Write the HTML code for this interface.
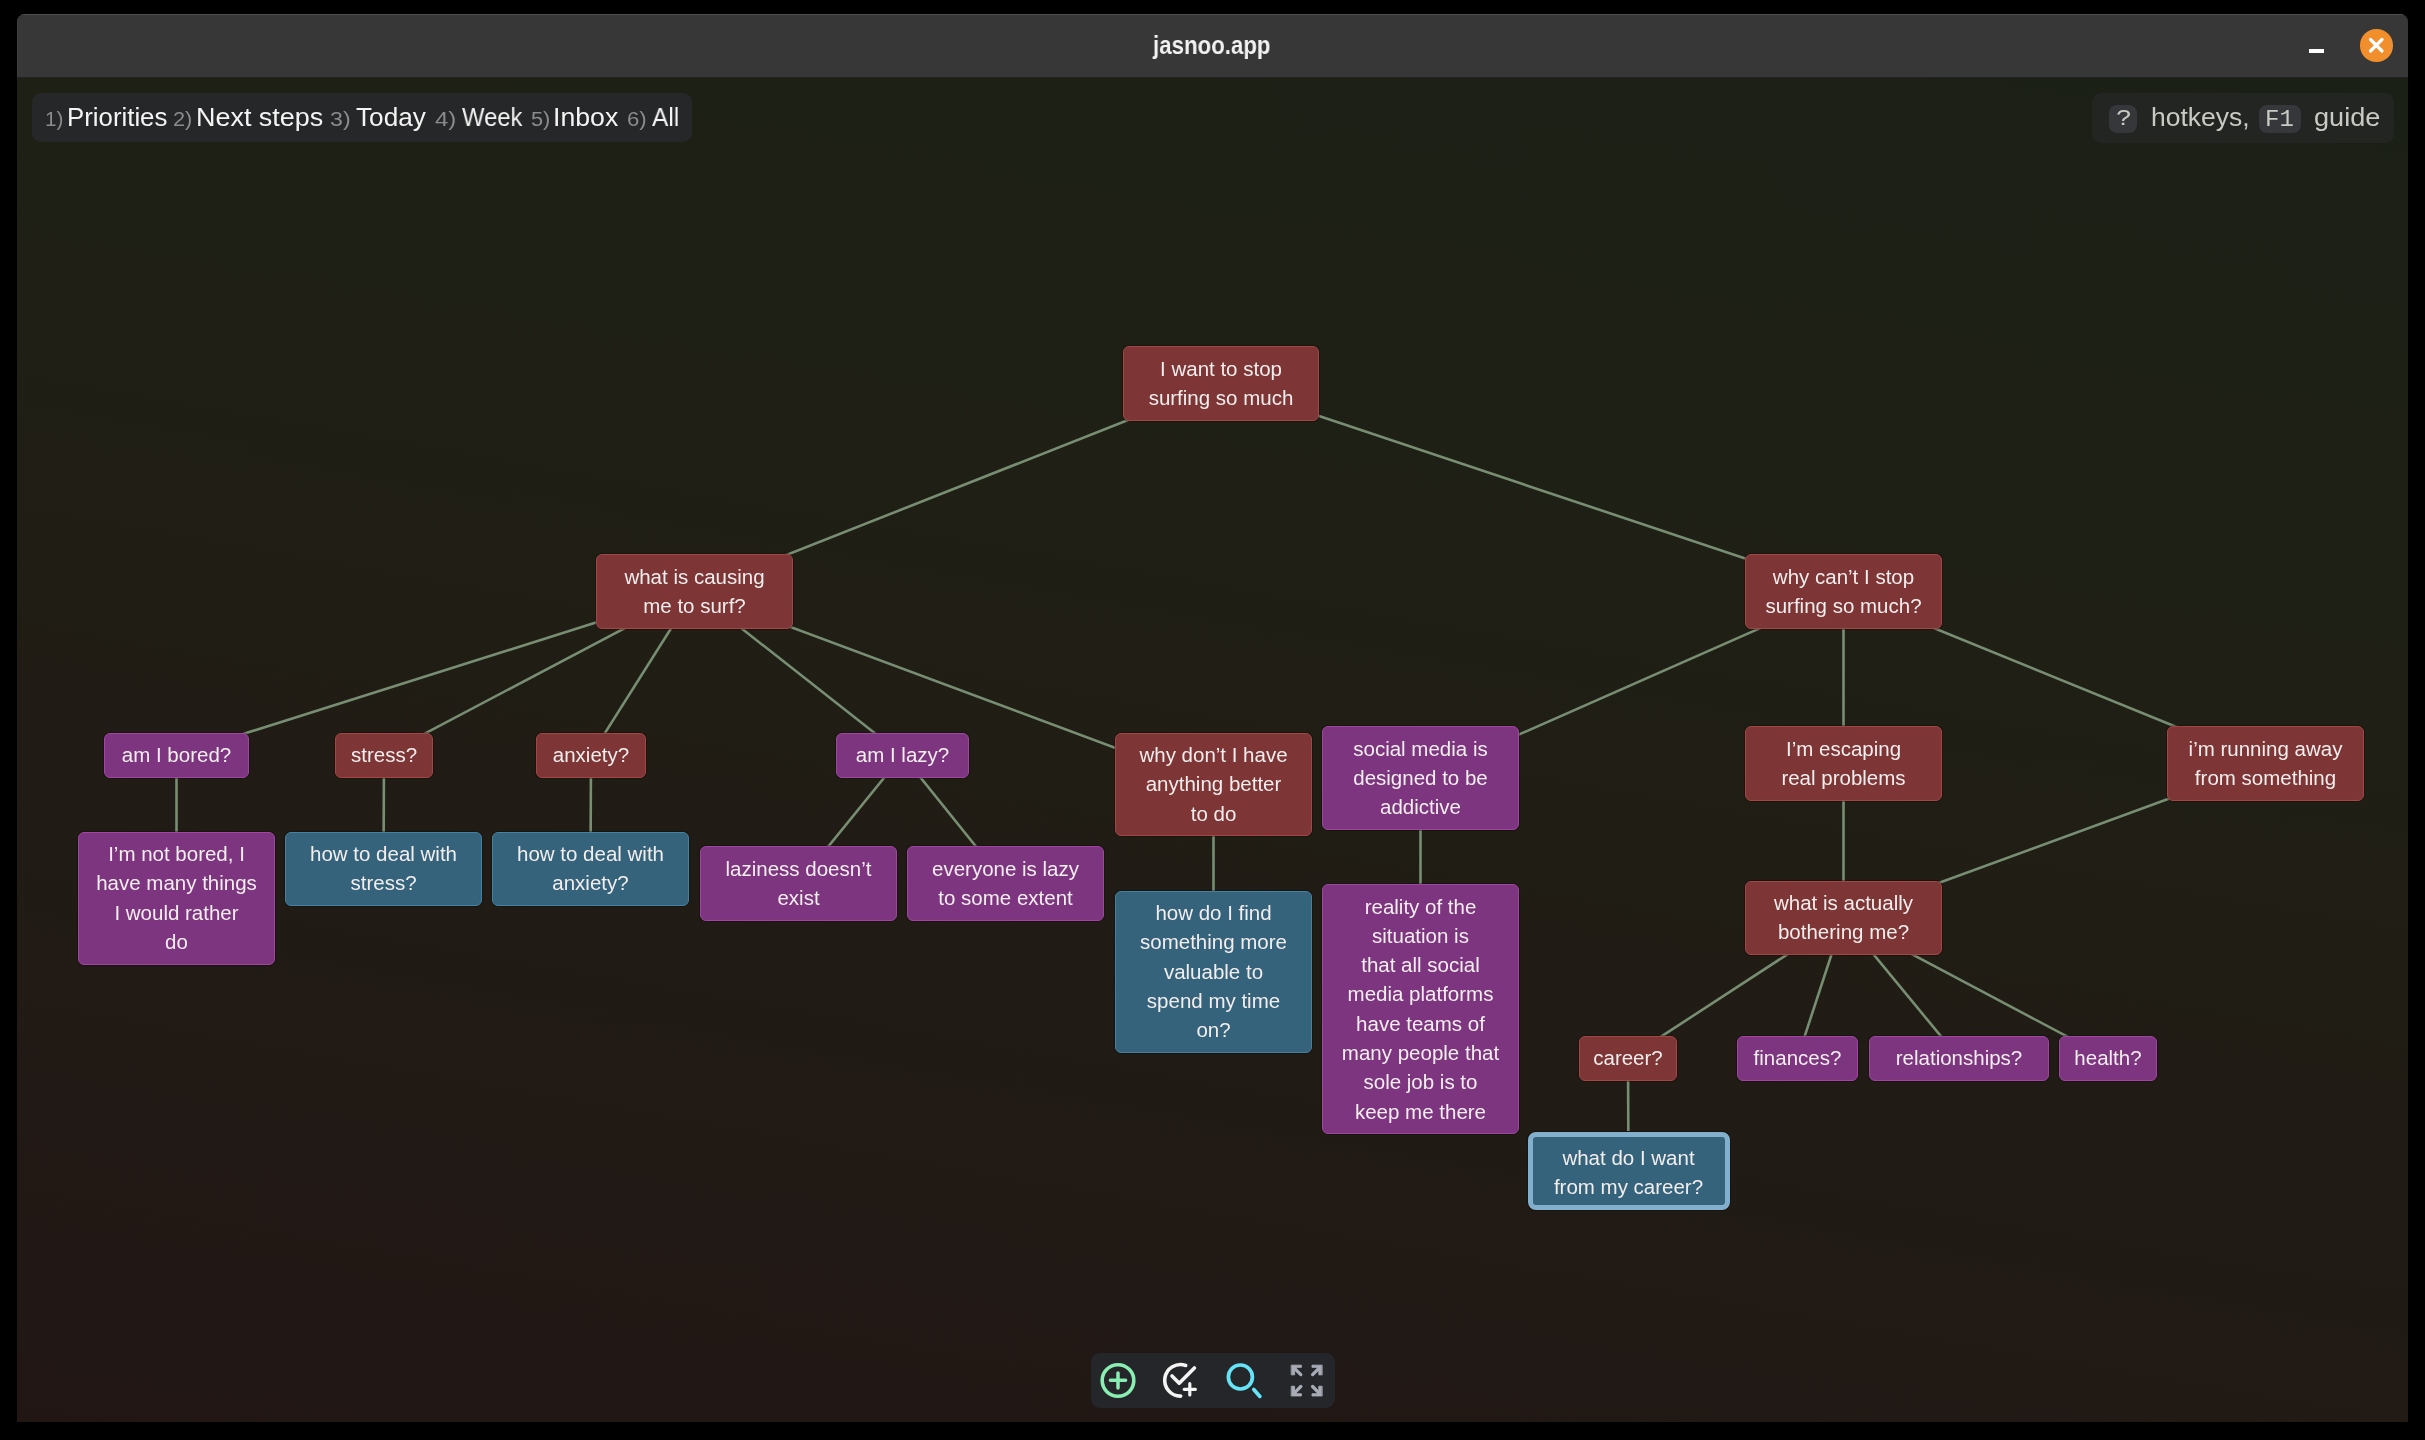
<!DOCTYPE html>
<html><head><meta charset="utf-8"><style>
html,body{margin:0;padding:0;width:2425px;height:1440px;background:#000;overflow:hidden;font-family:"Liberation Sans",sans-serif}
#nodes,.m{will-change:transform}
#win{position:absolute;left:17px;top:14px;width:2391px;height:1408px;border-radius:8px 8px 0 0;overflow:hidden;background:#1f2015}
#title{position:absolute;left:0;top:0;width:100%;height:63px;background:#373737;box-shadow:inset 0 1px 0 #4e4e4e, inset 1px 0 0 #3d3d3d}
#sep{position:absolute;left:0;top:63px;width:100%;height:1px;background:#222}
#canvas{position:absolute;left:0;top:64px;width:2391px;height:1344px;background:linear-gradient(190deg,#1b2016 0%,#1f2015 30%,#211a15 75%,#211614 100%)}
svg.edges{position:absolute;left:-17px;top:-78px;width:2425px;height:1440px}
svg.edges line{stroke:#778e72;stroke-width:2.6}
.n{position:absolute;box-sizing:border-box;border:1.5px solid;border-radius:6px;box-shadow:0 0 0 1px rgba(10,12,0,.35);color:#f3eeee;font-size:20.5px;line-height:29.3px;text-align:center;padding-top:6.5px;white-space:nowrap}
.n.sel{border:5.5px solid #82b0cc;border-radius:8px;padding-top:5.5px;box-shadow:0 0 0 1px #1a1410}
.pill{position:absolute;background:#262729;border-radius:9px}
.badge{position:absolute;background:#35373a;border-radius:8px}
.m{position:absolute;white-space:nowrap;transform-origin:0 0}
</style></head><body>
<div id="win">
 <div id="title">
  <div style="position:absolute;left:2292px;top:35px;width:15px;height:3.5px;background:#fff"></div>
  <div style="position:absolute;left:2343px;top:15px;width:32.5px;height:32.5px;border-radius:50%;background:#f08f2c"></div>
  <svg style="position:absolute;left:2343px;top:15px" width="33" height="33" viewBox="0 0 33 33"><path d="M10.5 10.5 L22 22 M22 10.5 L10.5 22" stroke="#fff" stroke-width="3.2" stroke-linecap="round"/></svg>
 </div>
 <div id="sep"></div>
 <div id="canvas">
  <svg class="edges" viewBox="0 0 2425 1440"><line x1="1221.0" y1="383.3" x2="694.5" y2="591.3"/><line x1="1221.0" y1="383.3" x2="1843.5" y2="591.3"/><line x1="694.5" y1="591.3" x2="176.5" y2="755.1"/><line x1="694.5" y1="591.3" x2="384.0" y2="755.1"/><line x1="694.5" y1="591.3" x2="591.0" y2="755.1"/><line x1="694.5" y1="591.3" x2="902.5" y2="755.1"/><line x1="694.5" y1="591.3" x2="1213.5" y2="784.5"/><line x1="176.5" y1="755.1" x2="176.5" y2="898.1"/><line x1="384.0" y1="755.1" x2="383.5" y2="868.8"/><line x1="591.0" y1="755.1" x2="590.5" y2="868.8"/><line x1="902.5" y1="755.1" x2="798.5" y2="883.3"/><line x1="902.5" y1="755.1" x2="1005.5" y2="883.3"/><line x1="1213.5" y1="784.5" x2="1213.5" y2="971.8"/><line x1="1843.5" y1="591.3" x2="1420.5" y2="778.0"/><line x1="1843.5" y1="591.3" x2="1843.5" y2="763.3"/><line x1="1843.5" y1="591.3" x2="2265.5" y2="763.3"/><line x1="1420.5" y1="778.0" x2="1420.5" y2="1009.2"/><line x1="1843.5" y1="763.3" x2="1843.5" y2="917.8"/><line x1="2265.5" y1="763.3" x2="1843.5" y2="917.8"/><line x1="1843.5" y1="917.8" x2="1628.0" y2="1058.2"/><line x1="1843.5" y1="917.8" x2="1797.5" y2="1058.2"/><line x1="1843.5" y1="917.8" x2="1959.0" y2="1058.2"/><line x1="1843.5" y1="917.8" x2="2108.0" y2="1058.2"/><line x1="1628.0" y1="1058.2" x2="1628.5" y2="1171.0"/></svg>
 </div>
</div>
<div class="m" style="left:1153.05px;top:28.09px;font-size:26px;line-height:34px;color:#f2f2f2;font-family:'Liberation Sans',sans-serif;font-weight:bold;transform:scaleX(0.8562);">jasnoo.app</div>
<div id="nodes" style="position:absolute;left:0;top:0">
<div class="n" style="left:1123px;top:346px;width:196px;height:74.6px;background:#7d3535;border-color:#a44648">I want to stop<br>surfing so much</div><div class="n" style="left:596px;top:554px;width:197px;height:74.6px;background:#7d3535;border-color:#a44648">what is causing<br>me to surf?</div><div class="n" style="left:1745px;top:554px;width:197px;height:74.6px;background:#7d3535;border-color:#a44648">why can’t I stop<br>surfing so much?</div><div class="n" style="left:104px;top:732.5px;width:145px;height:45.3px;background:#7d357f;border-color:#a046a2">am I bored?</div><div class="n" style="left:335px;top:732.5px;width:98px;height:45.3px;background:#7d3535;border-color:#a44648">stress?</div><div class="n" style="left:536px;top:732.5px;width:110px;height:45.3px;background:#7d3535;border-color:#a44648">anxiety?</div><div class="n" style="left:836px;top:732.5px;width:133px;height:45.3px;background:#7d357f;border-color:#a046a2">am I lazy?</div><div class="n" style="left:1115px;top:732.5px;width:197px;height:103.9px;background:#7d3535;border-color:#a44648">why don’t I have<br>anything better<br>to do</div><div class="n" style="left:1322px;top:726px;width:197px;height:103.9px;background:#7d357f;border-color:#a046a2">social media is<br>designed to be<br>addictive</div><div class="n" style="left:1745px;top:726px;width:197px;height:74.6px;background:#7d3535;border-color:#a44648">I’m escaping<br>real problems</div><div class="n" style="left:2167px;top:726px;width:197px;height:74.6px;background:#7d3535;border-color:#a44648">i’m running away<br>from something</div><div class="n" style="left:78px;top:831.5px;width:197px;height:133.2px;background:#7d357f;border-color:#a046a2">I’m not bored, I<br>have many things<br>I would rather<br>do</div><div class="n" style="left:285px;top:831.5px;width:197px;height:74.6px;background:#35637b;border-color:#4681a3">how to deal with<br>stress?</div><div class="n" style="left:492px;top:831.5px;width:197px;height:74.6px;background:#35637b;border-color:#4681a3">how to deal with<br>anxiety?</div><div class="n" style="left:700px;top:846px;width:197px;height:74.6px;background:#7d357f;border-color:#a046a2">laziness doesn’t<br>exist</div><div class="n" style="left:907px;top:846px;width:197px;height:74.6px;background:#7d357f;border-color:#a046a2">everyone is lazy<br>to some extent</div><div class="n" style="left:1115px;top:890.5px;width:197px;height:162.5px;background:#35637b;border-color:#4681a3">how do I find<br>something more<br>valuable to<br>spend my time<br>on?</div><div class="n" style="left:1322px;top:884px;width:197px;height:250.4px;background:#7d357f;border-color:#a046a2">reality of the<br>situation is<br>that all social<br>media platforms<br>have teams of<br>many people that<br>sole job is to<br>keep me there</div><div class="n" style="left:1745px;top:880.5px;width:197px;height:74.6px;background:#7d3535;border-color:#a44648">what is actually<br>bothering me?</div><div class="n" style="left:1579px;top:1035.5px;width:98px;height:45.3px;background:#7d3535;border-color:#a44648">career?</div><div class="n" style="left:1737px;top:1035.5px;width:121px;height:45.3px;background:#7d357f;border-color:#a046a2">finances?</div><div class="n" style="left:1869px;top:1035.5px;width:180px;height:45.3px;background:#7d357f;border-color:#a046a2">relationships?</div><div class="n" style="left:2059px;top:1035.5px;width:98px;height:45.3px;background:#7d357f;border-color:#a046a2">health?</div><div class="n sel" style="left:1527.5px;top:1132px;width:202px;height:78.0px;background:#35637b">what do I want<br>from my career?</div>
</div>
<div class="pill" style="left:32px;top:93px;width:660px;height:48.5px"></div>
<div class="pill" style="left:2092px;top:93px;width:301.5px;height:49.5px;background:#232522"></div>
<div class="badge" style="left:2109px;top:105px;width:28px;height:28px"></div>
<div class="badge" style="left:2259px;top:105px;width:41.5px;height:28px"></div>
<div class="pill" style="left:1090.5px;top:1352.7px;width:244.2px;height:55.5px;background:#252629"></div>
<div class="m" style="left:44.57px;top:105.32px;font-size:20.7px;line-height:27px;color:#8a8b8c;font-family:'Liberation Sans',sans-serif;font-weight:normal;transform:scaleX(0.9855);">1)</div><div class="m" style="left:66.64px;top:100.06px;font-size:25.8px;line-height:34px;color:#f4f4f4;font-family:'Liberation Sans',sans-serif;font-weight:normal;transform:scaleX(1.0003);">Priorities</div><div class="m" style="left:172.91px;top:105.32px;font-size:20.7px;line-height:27px;color:#8a8b8c;font-family:'Liberation Sans',sans-serif;font-weight:normal;transform:scaleX(1.0529);">2)</div><div class="m" style="left:196.45px;top:100.06px;font-size:25.8px;line-height:34px;color:#f4f4f4;font-family:'Liberation Sans',sans-serif;font-weight:normal;transform:scaleX(1.0440);">Next steps</div><div class="m" style="left:330.07px;top:105.32px;font-size:20.7px;line-height:27px;color:#8a8b8c;font-family:'Liberation Sans',sans-serif;font-weight:normal;transform:scaleX(1.1191);">3)</div><div class="m" style="left:356.48px;top:100.06px;font-size:25.8px;line-height:34px;color:#f4f4f4;font-family:'Liberation Sans',sans-serif;font-weight:normal;transform:scaleX(1.0151);">Today</div><div class="m" style="left:434.82px;top:105.32px;font-size:20.7px;line-height:27px;color:#8a8b8c;font-family:'Liberation Sans',sans-serif;font-weight:normal;transform:scaleX(1.1570);">4)</div><div class="m" style="left:462.00px;top:100.06px;font-size:25.8px;line-height:34px;color:#f4f4f4;font-family:'Liberation Sans',sans-serif;font-weight:normal;transform:scaleX(0.9232);">Week</div><div class="m" style="left:530.93px;top:105.32px;font-size:20.7px;line-height:27px;color:#8a8b8c;font-family:'Liberation Sans',sans-serif;font-weight:normal;transform:scaleX(1.0518);">5)</div><div class="m" style="left:553.30px;top:100.06px;font-size:25.8px;line-height:34px;color:#f4f4f4;font-family:'Liberation Sans',sans-serif;font-weight:normal;transform:scaleX(1.0341);">Inbox</div><div class="m" style="left:626.79px;top:105.32px;font-size:20.7px;line-height:27px;color:#8a8b8c;font-family:'Liberation Sans',sans-serif;font-weight:normal;transform:scaleX(1.0715);">6)</div><div class="m" style="left:651.80px;top:100.06px;font-size:25.8px;line-height:34px;color:#f4f4f4;font-family:'Liberation Sans',sans-serif;font-weight:normal;transform:scaleX(0.9487);">All</div><div class="m" style="left:2115.57px;top:105.21px;font-size:22.5px;line-height:29px;color:#c9cac3;font-family:'Liberation Mono',monospace;font-weight:normal;transform:scaleX(1.1820);">?</div><div class="m" style="left:2150.75px;top:100.50px;font-size:25.1px;line-height:33px;color:#c9cac3;font-family:'Liberation Sans',sans-serif;font-weight:normal;transform:scaleX(1.0557);">hotkeys,</div><div class="m" style="left:2265.33px;top:103.95px;font-size:23.5px;line-height:31px;color:#c9cac3;font-family:'Liberation Mono',monospace;font-weight:normal;transform:scaleX(1.0237);">F1</div><div class="m" style="left:2313.92px;top:100.50px;font-size:25.1px;line-height:33px;color:#c9cac3;font-family:'Liberation Sans',sans-serif;font-weight:normal;transform:scaleX(1.0804);">guide</div>
<svg style="position:absolute;left:0;top:0" width="2425" height="1440" viewBox="0 0 2425 1440" fill="none" stroke-linecap="round" stroke-linejoin="round">
<circle cx="1118" cy="1380.5" r="15.8" stroke="#88eeb2" stroke-width="3.6"/>
<path d="M1110.4 1380.3H1125.6M1118 1373V1388" stroke="#88eeb2" stroke-width="3.5"/>
<path d="M1185.7 1365.5A15.75 15.75 0 1 0 1180.7 1396.1" stroke="#f4f4f4" stroke-width="3.6"/>
<path d="M1172 1376L1179.2 1383.2L1194.4 1368" stroke="#f4f4f4" stroke-width="3.6"/>
<path d="M1184.2 1389.3H1195.4M1189.8 1383.7V1394.9" stroke="#f4f4f4" stroke-width="3.2"/>
<circle cx="1240.4" cy="1377" r="12" stroke="#64e4f6" stroke-width="3.7"/>
<path d="M1253.8 1389.5L1259.9 1396.4" stroke="#64e4f6" stroke-width="3.7"/>
<g transform="translate(1306.7 1380.55)" fill="#a8acb6" stroke="#a8acb6">
<g id="arr"><path d="M-15.1 -15.4H-5.3V-13.2H-10L-12.1 -9.6V-5.7H-15.1Z" stroke-width="0.9"/><path d="M-12.7 -12.75L-5.9 -5.95" stroke-width="3.3" fill="none"/></g>
<g transform="scale(-1 1)"><path d="M-15.1 -15.4H-5.3V-13.2H-10L-12.1 -9.6V-5.7H-15.1Z" stroke-width="0.9"/><path d="M-12.7 -12.75L-5.9 -5.95" stroke-width="3.3" fill="none"/></g>
<g transform="scale(1 -1)"><path d="M-15.1 -15.4H-5.3V-13.2H-10L-12.1 -9.6V-5.7H-15.1Z" stroke-width="0.9"/><path d="M-12.7 -12.75L-5.9 -5.95" stroke-width="3.3" fill="none"/></g>
<g transform="scale(-1 -1)"><path d="M-15.1 -15.4H-5.3V-13.2H-10L-12.1 -9.6V-5.7H-15.1Z" stroke-width="0.9"/><path d="M-12.7 -12.75L-5.9 -5.95" stroke-width="3.3" fill="none"/></g>
</g>
</svg>
</body></html>
